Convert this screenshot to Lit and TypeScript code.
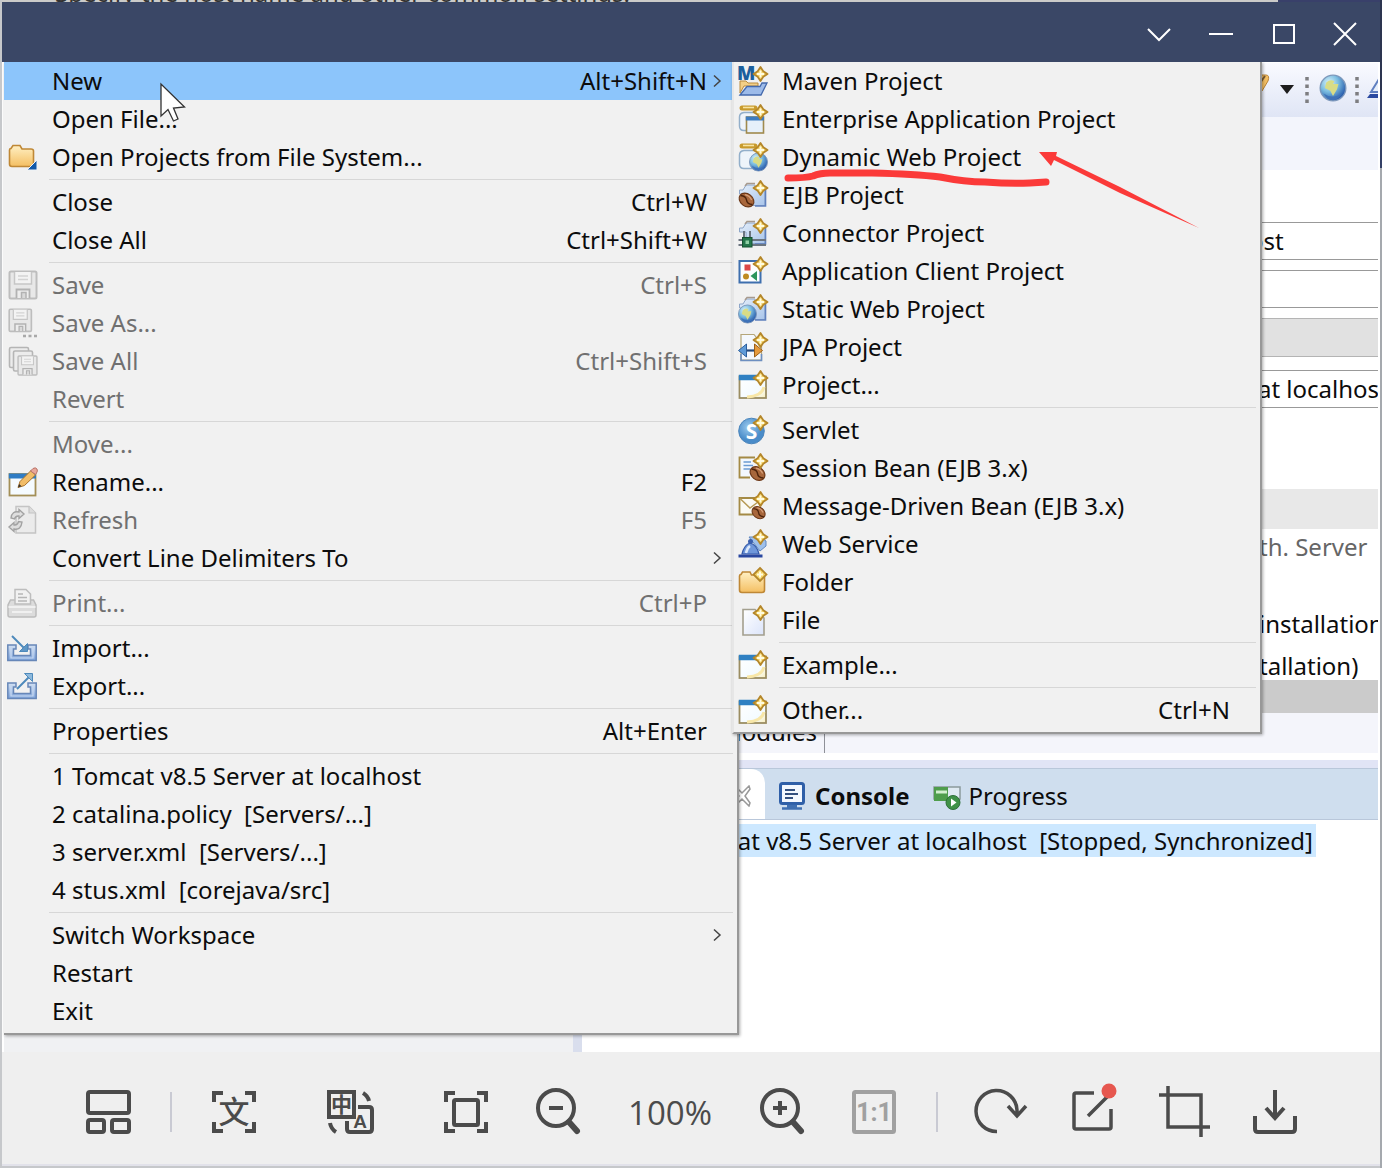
import { LitElement, html, svg, css, nothing } from "lit";
import { customElement, state } from "lit/decorators.js";
import { classMap } from "lit/directives/class-map.js";

type Item = {
  label: string;
  icon?: string;
  keys?: string;
  sub?: boolean;
  off?: boolean;
};

const FILE_MENU: Item[][] = [
  [
    { label: "New", keys: "Alt+Shift+N", sub: true },
    { label: "Open File..." },
    { label: "Open Projects from File System...", icon: "openProjects" },
  ],
  [
    { label: "Close", keys: "Ctrl+W" },
    { label: "Close All", keys: "Ctrl+Shift+W" },
  ],
  [
    { label: "Save", keys: "Ctrl+S", icon: "save", off: true },
    { label: "Save As...", icon: "saveAs", off: true },
    { label: "Save All", keys: "Ctrl+Shift+S", icon: "saveAll", off: true },
    { label: "Revert", off: true },
  ],
  [
    { label: "Move...", off: true },
    { label: "Rename...", keys: "F2", icon: "rename" },
    { label: "Refresh", keys: "F5", icon: "refresh", off: true },
    { label: "Convert Line Delimiters To", sub: true },
  ],
  [{ label: "Print...", keys: "Ctrl+P", icon: "print", off: true }],
  [
    { label: "Import...", icon: "import" },
    { label: "Export...", icon: "export" },
  ],
  [{ label: "Properties", keys: "Alt+Enter" }],
  [
    { label: "1 Tomcat v8.5 Server at localhost" },
    { label: "2 catalina.policy  [Servers/...]" },
    { label: "3 server.xml  [Servers/...]" },
    { label: "4 stus.xml  [corejava/src]" },
  ],
  [{ label: "Switch Workspace", sub: true }, { label: "Restart" }, { label: "Exit" }],
];

const NEW_MENU: Item[][] = [
  [
    { label: "Maven Project", icon: "maven" },
    { label: "Enterprise Application Project", icon: "enterprise" },
    { label: "Dynamic Web Project", icon: "dynamicWeb" },
    { label: "EJB Project", icon: "ejb" },
    { label: "Connector Project", icon: "connector" },
    { label: "Application Client Project", icon: "appClient" },
    { label: "Static Web Project", icon: "staticWeb" },
    { label: "JPA Project", icon: "jpa" },
    { label: "Project...", icon: "wizard" },
  ],
  [
    { label: "Servlet", icon: "servlet" },
    { label: "Session Bean (EJB 3.x)", icon: "sessionBean" },
    { label: "Message-Driven Bean (EJB 3.x)", icon: "messageBean" },
    { label: "Web Service", icon: "webService" },
    { label: "Folder", icon: "folder" },
    { label: "File", icon: "file" },
  ],
  [{ label: "Example...", icon: "wizard" }],
  [{ label: "Other...", keys: "Ctrl+N", icon: "wizard" }],
];

const sparkle = svg`
  <path d="M22.5 1 L25.3 5.2 L29.5 8 L25.3 10.8 L22.5 15 L19.7 10.8 L15.5 8 L19.7 5.2 Z" fill="#f4d468" stroke="#b4862a" stroke-width="1.8" stroke-linejoin="round"/>
  <path d="M22.5 4.5 V11.5 M19 8 H26" stroke="#fffbe0" stroke-width="1.8"/>`;

const bean = (x: number, y: number) => svg`
  <g transform="translate(${x} ${y}) rotate(38)">
    <ellipse rx="8" ry="6.2" fill="#a8673c" stroke="#6b3717" stroke-width="1.2"/>
    <path d="M-7.5 0 Q-3 -3 0 0 T7.5 0" fill="none" stroke="#4e240c" stroke-width="1.5"/>
    <path d="M-4.5 -3.4 Q0 -5.4 4 -3.2" fill="none" stroke="#d8a079" stroke-width="1.3"/>
  </g>`;

const globe = (x: number, y: number, r: number) => svg`
  <g transform="translate(${x} ${y}) scale(${r / 10})">
    <circle r="9.5" fill="url(#g-globe)" stroke="#7d98bb" stroke-width="1"/>
    <path d="M-5 -4 Q-2 -7 1 -5 L0 -3 L4 -3 L3 1 L0 6 L-2 2 L-6 0 Z" fill="#d8dc86"/>
    <path d="M-7 4 Q0 9 7 4 Q3 9 0 9 Q-4 9 -7 4 Z" fill="#3f72b8"/>
  </g>`;

const projectFolder = svg`
  <path d="M1.500 10 H5 L8 5 H17 V8 H27 V25.500 H8 V14 H1.500 Z" fill="url(#g-blue)" stroke="#8ea6c8" stroke-width="1"/>
  <path d="M7 6 L9 3.500 H17" fill="none" stroke="#a79a8e" stroke-width="1.500"/>
  <path d="M27.500 10 V26 H17" fill="none" stroke="#5f80bd" stroke-width="1.600"/>`;

const jeeBase = svg`
  <path d="M4 4 H17" stroke="#c89a2c" stroke-width="5" stroke-linecap="round"/>
  <path d="M5 3.500 H16" stroke="#f7e3a0" stroke-width="1.600"/>
  <path d="M18 8.500 H6 Q1.500 9 1.500 13 V22 Q1.500 26.500 6 26.500 H16" fill="#eef4fa" stroke="#93afca" stroke-width="1.500"/>`;

const disk = svg`
  <rect x="1.500" y="1.500" width="27" height="27" rx="1.500" fill="#e8e8e8" stroke="#bdbdbd" stroke-width="2"/>
  <path d="M6.500 2 V14 H23.500 V2" fill="#f3f3f3" stroke="#c6c6c6" stroke-width="1.500"/>
  <path d="M10 6 H20 M10 9.500 H20" stroke="#d3d3d3" stroke-width="1.500"/>
  <path d="M8.500 28 V19.500 H21.500 V28" fill="#ededed" stroke="#b2b2b2" stroke-width="1.800"/>
  <path d="M13.500 28 V22.500 H18 V28" fill="#d9d9d9" stroke="#b2b2b2" stroke-width="1.500"/>`;

const tray = svg`
  <path d="M-0.200 12 H8 V16 H5.500 V22.500 H22.500 V16 H20 V12 H28.200 V27.500 H-0.200 Z" fill="url(#g-tray)" stroke="#6787b8" stroke-width="1.500"/>
  <path d="M3 15 V25 H25 V15" fill="none" stroke="#c8d9f0" stroke-width="1.200"/>`;

const ICONS: Record<string, unknown> = {
  openProjects: svg`
    <path d="M1.500 8 Q1.500 6.500 3 6.500 L5 3.500 H12 L14 7 H23 Q25.500 7 25.500 9 V22 Q25.500 24.500 23 24.500 H4 Q1.500 24.500 1.500 22 Z" fill="url(#g-folder)" stroke="#bf8836" stroke-width="1.600"/>
    <path d="M29 18 V28 H19 Z" fill="#1259a8" stroke="#eef3f8" stroke-width="1"/>`,
  save: disk,
  saveAs: svg`<g transform="scale(.82)">${disk}</g><path d="M15 28 H18 M20.500 28 H23.500 M26 28 H29" stroke="#a9a9a9" stroke-width="2.500"/>`,
  saveAll: svg`
    <rect x="1.500" y="1.500" width="19" height="20" rx="1.500" fill="#ececec" stroke="#b5b5b5" stroke-width="1.600"/>
    <rect x="5.500" y="5" width="19" height="20" rx="1.500" fill="#ececec" stroke="#b5b5b5" stroke-width="1.600"/>
    <g transform="translate(9 9) scale(.7)">${disk}</g>`,
  rename: svg`
    <rect x="1.500" y="7" width="26" height="21.500" fill="#f5fbff" stroke="#a38f57" stroke-width="1.800"/>
    <path d="M0.800 9 H28" stroke="#2f7cc4" stroke-width="5"/>
    <path d="M10 20.500 L12 14.500 L23 3.500 L27.500 8 L16.500 18.500 Z" fill="#f1bd68" stroke="#a8732c" stroke-width="1"/>
    <path d="M10 20.500 L11.200 17 L13.500 19.300 Z" fill="#333"/>
    <path d="M22.500 4 L25 1.500 Q27.500 0 29 2 Q30 4 28.500 6 L27.500 7.500 Z" fill="#e9a79b" stroke="#b87468" stroke-width="1"/>`,
  refresh: svg`
    <path d="M8 1.500 H21 L27.500 8 V28 H8 Z" fill="#ebebeb" stroke="#c4c4c4" stroke-width="1.500"/>
    <path d="M21 1.500 V8 H27.500" fill="#dcdcdc" stroke="#c4c4c4" stroke-width="1.200"/>
    <path d="M3 13 Q4 5.500 11 7 V4.500 L16 9 L11 13.500 V11 Q7.500 10.500 6.500 14 Z" fill="#dedede" stroke="#a2a2a2" stroke-width="1.400"/>
    <path d="M14 17 Q13 25.500 6 24 V26.500 L1 22 L6 17.500 V20 Q9.500 20.500 10.500 16.500 Z" fill="#dedede" stroke="#a2a2a2" stroke-width="1.400"/>`,
  print: svg`
    <path d="M2.500 12 H25.500 L28 17 V27 Q28 29 26 29 H2 Q0 29 0 27 V17 Z" fill="#dcdcdc" stroke="#bcbcbc" stroke-width="1.500"/>
    <path d="M7 16 V1.500 H18 L22.500 6 V16 Z" fill="#f1f1f1" stroke="#bdbdbd" stroke-width="1.500"/>
    <path d="M10 6 H15 M10 9.500 H19 M10 13 H19" stroke="#b6b6b6" stroke-width="1.400"/>
    <path d="M0.500 19 H27.500 M4 24 H24" stroke="#f0f0f0" stroke-width="2"/>`,
  import: svg`${tray}<path d="M4 3 L17 16" stroke="#4d89bb" stroke-width="2"/><path d="M19.500 10.500 V18.500 H11.500 Z" fill="#5f97c6" stroke="#4d89bb"/>`,
  export: svg`${tray}<path d="M9 18 L22 5" stroke="#4d89bb" stroke-width="2"/><path d="M16.500 2.500 H24.500 V10.500 Z" fill="#8db9dc" stroke="#4d89bb"/>`,
  maven: svg`
    <path d="M2 27 V15 H8 L10 17 H20 V20 H6 Z" fill="#f3cf86" stroke="#b98b3e"/>
    <text x="-1" y="14" font-size="19" font-weight="800" fill="#1c5f9c" font-family="Open Sans">M</text>
    <path d="M2 29 L9 20.500 H22 L24 17 H29 L23 29 Z" fill="#9dbbe9" stroke="#4469ac" stroke-width="1.300"/>
    ${sparkle}`,
  enterprise: svg`${jeeBase}
    <rect x="8.500" y="13" width="17" height="16" fill="#e6f0fa" stroke="#a08a4d" stroke-width="1.600"/>
    <path d="M7.800 14.500 H26" stroke="#3d7cc0" stroke-width="4"/>${sparkle}`,
  dynamicWeb: svg`${jeeBase}${globe(20.5, 20, 9.5)}${sparkle}`,
  ejb: svg`${projectFolder}${bean(8.5, 20)}${sparkle}`,
  connector: svg`${projectFolder}
    <path d="M0.500 22 H28 M0.500 27 H28 M6 13 V22 M12 13 V22" stroke="#6c7580" stroke-width="2"/>
    <rect x="4.500" y="19.500" width="9.500" height="9.500" fill="#24764a" stroke="#155231"/>
    <rect x="7.500" y="22.500" width="3.500" height="3.500" fill="#8fd0a5"/>${sparkle}`,
  appClient: svg`
    <rect x="1.500" y="5" width="21" height="21.500" fill="#fdfeff" stroke="#3e6fae" stroke-width="2"/>
    <rect x="6.500" y="8.500" width="6" height="6" fill="#dc4747"/>
    <circle cx="8" cy="20.500" r="3" fill="#c08c23"/>
    <path d="M19 15 V25 L12.500 20 Z" fill="#2e955c"/>${sparkle}`,
  staticWeb: svg`${projectFolder}${globe(9.5, 20, 9.5)}${sparkle}`,
  jpa: svg`
    <path d="M3 28 V2.500 H16 L23.500 12 V28 Z" fill="#f4f8fd" stroke="#b5a679" stroke-width="1.200"/>
    <path d="M3 22 V28.500 H23.500 V22" fill="none" stroke="#6d8fc0" stroke-width="1.600"/>
    <path d="M6 18.500 H20" stroke="#254a7c" stroke-width="2.200"/>
    <path d="M0.500 18.500 L8.500 12 V25 Z" fill="#5f9bd8" stroke="#2c5f9d"/>
    <path d="M24.500 18.500 L16.500 12 V25 Z" fill="#e59a3c" stroke="#9a5f17"/>${sparkle}`,
  wizard: svg`
    <rect x="1.500" y="6.500" width="26.500" height="21.500" fill="url(#g-page)" stroke="#9b8d62" stroke-width="1.800"/>
    <path d="M0.800 7.500 H20" stroke="#2f80c2" stroke-width="5.500"/>
    <path d="M26 17 Q24 26 9 27" fill="none" stroke="#f8e7a8" stroke-width="3"/>${sparkle}`,
  servlet: svg`
    <circle cx="13.500" cy="16" r="12.800" fill="url(#g-servlet)" stroke="#4b85bb"/>
    <text x="13.500" y="23.500" font-size="21" font-weight="700" fill="#fff" text-anchor="middle" font-family="Open Sans">S</text>${sparkle}`,
  sessionBean: svg`
    <path d="M17 4.500 H1.500 V24.500 H12" fill="#f3f8fe" stroke="#a48a45" stroke-width="1.800"/>
    <path d="M5.500 9 H13 M5.500 12.500 H15 M5.500 16 H12" stroke="#6b9bd2" stroke-width="1.600"/>${bean(19.5, 20.5)}${sparkle}`,
  messageBean: svg`
    <path d="M15 23.500 H1.500 V7 H22 V15" fill="#fbfaf4" stroke="#a48a45" stroke-width="1.800"/>
    <path d="M2 7.500 L12 17 L20 11" fill="none" stroke="#b79a55" stroke-width="1.500"/><g transform="translate(3 4) scale(.88)">${bean(20, 20)}</g>${sparkle}`,
  webService: svg`
    <path d="M11 8 H22 L28 12 V17 L22 22 Z" fill="#9fc0ea" stroke="#6188c0"/>
    <path d="M4 25 Q6 16 12 14 Q19 16 21 25 Z" fill="#6f97da" stroke="#3459a8" stroke-width="1.200"/>
    <circle cx="12.500" cy="12.500" r="2.500" fill="#3a5fae"/>
    <path d="M8 24 Q9 19 12 17" fill="none" stroke="#dce9fb" stroke-width="2.500"/>
    <path d="M0.500 28.500 V25.500 H24.500 V28.500 Z" fill="#2947a0"/>${sparkle}`,
  folder: svg`
    <path d="M1.500 9 Q1.500 7.500 3 7.500 L4.500 5 H12 L13.500 8 H24 Q26.500 8 26.500 10 V23 Q26.500 25.500 24 25.500 H4 Q1.500 25.500 1.500 23 Z" fill="url(#g-folder)" stroke="#bf8836" stroke-width="1.600"/>
    <path d="M22 1 L28.500 7.500 L22 14 L15.500 7.500 Z" fill="#f4d468" stroke="#b4862a" stroke-width="1.800"/>
    <path d="M22 4.500 V10.500 M19 7.500 H25" stroke="#fffbe0" stroke-width="2"/>`,
  file: svg`
    <path d="M5 4.500 H17 L26 13 V30 H5 Z" fill="url(#g-doc)" stroke="#a39f8e" stroke-width="1.600"/>${sparkle}`,
};

const icon = (name?: string) =>
  name
    ? html`<svg class="glyph" viewBox="0 0 30 30" aria-hidden="true">${ICONS[name]}</svg>`
    : nothing;

const corners = svg`<path d="M4 14 V5 H13 M35 5 H44 V14 M44 34 V43 H35 M13 43 H4 V34"/>`;

const TOOLS: Record<string, unknown> = {
  gallery: svg`<rect x="4" y="4" width="41" height="21" rx="2"/><rect x="4" y="32" width="16" height="12" rx="2"/><rect x="28" y="32" width="17" height="12" rx="2"/>`,
  ocr: svg`${corners}<text x="24" y="35" font-size="31" font-weight="500" text-anchor="middle" class="solid" font-family="Noto Sans CJK SC">文</text>`,
  translate: svg`
    <path d="M32 19 H43 Q46 19 46 22 V41 Q46 44 43 44 H24 Q21 44 21 41 V33"/>
    <rect x="3" y="4" width="25" height="25"/>
    <path d="M37 5 Q42 8 43 13 M4 35 Q5 41 10 44"/>
    <text x="15.500" y="24" font-size="21" font-weight="700" text-anchor="middle" class="solid" font-family="Noto Sans CJK SC">中</text>
    <text x="34" y="40" font-size="19" font-weight="700" text-anchor="middle" class="solid" font-family="Liberation Sans">A</text>`,
  fit: svg`${corners}<rect x="12" y="12" width="24" height="25" rx="1.500"/>`,
  zoomOut: svg`<circle cx="22" cy="20" r="18"/><path d="M15 20 H29"/><path d="M35 34 L43 43" class="thick"/>`,
  zoomIn: svg`<circle cx="22" cy="20" r="18"/><path d="M15 20 H29 M22 13 V27"/><path d="M35 34 L43 43" class="thick"/>`,
  actual: svg`<rect x="4" y="4" width="40" height="40" rx="1.500"/><text x="24" y="33" font-size="25" font-weight="700" text-anchor="middle" class="solid" font-family="Roboto">1:1</text>`,
  rotate: svg`<path d="M21 43.500 A20.500 20.500 0 1 1 41 22 V27 M32 18 L41 28 L50 18" stroke-width="3.500"/>`,
  edit: svg`<path d="M26 5 H8 Q6 5 6 7 V39 Q6 41 8 41 H41 Q43 41 43 39 V21 M20 28 L40 8" stroke-width="3.500"/><circle cx="41" cy="3" r="7.500" class="dot"/>`,
  crop: svg`<path d="M8 -2 V39 H50 M-1 7 H41 V49" stroke-width="3.500"/>`,
  download: svg`<path d="M23 2 V29 M14 20 L23 30 L32 20 M3 28 V41 Q3 44 6 44 H40 Q43 44 43 41 V28"/>`,
};

@customElement("app-root")
export class AppRoot extends LitElement {
  @state() private open = "New";

  static styles = css`
    :host {
      display: flex;
      flex-direction: column;
      box-sizing: border-box;
      min-height: 100vh;
      padding: 0 2px 2px;
      overflow: hidden;
      background: linear-gradient(#2d3550 0 90px, #344066 90px 168px, #a5a9ae 168px) right / 2px 100% no-repeat, #c6c8cb;
      font: 24px/32px "Noto Sans", "Open Sans", sans-serif;
      color: #0c0c0c;
    }
    button, input {
      font: inherit;
      color: inherit;
      border: 0;
      margin: 0;
      padding: 0;
      background: none;
      border-radius: 0;
    }
    .behind {
      display: flex;
      align-items: flex-end;
      justify-content: space-between;
      height: 2px;
      overflow: hidden;
      line-height: 18px;
      white-space: nowrap;
      color: #333;
      padding-left: 53px;
      background: linear-gradient(90deg, #cbcbc9 1276px, #39406a 1276px);
    }
    .titlebar {
      display: flex;
      justify-content: flex-end;
      height: 60px;
      background: #3a4766;
      padding-right: 4px;
    }
    .titlebar button {
      width: 62px;
      height: 60px;
      padding-top: 3px;
    }
    .titlebar svg {
      display: block;
      margin: auto;
      width: 24px;
      height: 24px;
      fill: none;
      stroke: #fff;
      stroke-width: 2;
    }
    .stage {
      position: relative;
      flex: 1;
      display: grid;
      grid-template-columns: 569px 9px minmax(0, 1fr);
      overflow: hidden;
      padding: 1px 2px 0;
      background: #fff;
    }
    .outline { background: #f0f1f3; }
    .sash { background: #d9deed; }
    .ide {
      display: flex;
      flex-direction: column;
      overflow: hidden;
      white-space: nowrap;
    }
    .coolbar {
      display: flex;
      justify-content: flex-end;
      height: 54px;
      background: linear-gradient(#f9faff, #dfe5f5);
    }
    .coolbar svg { width: 120px; height: 50px; flex: none; }
    .heading { height: 53px; background: #f3f5fc; }
    .form {
      display: flex;
      flex-direction: column;
      padding-top: 52px;
    }
    .field {
      box-sizing: border-box;
      height: 38px;
      border: solid #999;
      border-width: 1px 0;
      padding-left: 667px;
      padding-bottom: 2px;
      margin-bottom: 10px;
      width: 100%;
    }
    .field.name { padding-left: 676px; margin-bottom: 81px; }
    .strip {
      box-sizing: border-box;
      height: 39px;
      background: #e1e1e1;
      border: solid #b4b4b4;
      border-width: 1px 0;
      margin-bottom: 13px;
    }
    .section { height: 40px; background: #e8e8e8; margin-bottom: 4px; }
    .line { padding-left: 677px; line-height: 28px; margin-bottom: 14px; }
    .line.hint { color: #666; margin-bottom: 49px; }
    .line.last { margin-bottom: 0; }
    .scroll { height: 33px; background: #cbcbcb; }
    .pages {
      display: flex;
      height: 40px;
      background: #f4f5fb;
    }
    .page {
      width: 235px;
      padding-right: 7px;
      border-right: 1px solid #8e9098;
      text-align: right;
      line-height: 38px;
    }
    .band {
      height: 8px;
      margin-top: 7px;
      background: #e1e4f5;
    }
    .views {
      display: flex;
      align-items: center;
      height: 50px;
      background: #cfdeee;
      border: solid #b9c7da;
      border-width: 1px 0;
    }
    .view {
      display: flex;
      align-items: center;
      gap: 8px;
      box-sizing: border-box;
      height: 50px;
      padding: 3px 9px 0 14px;
    }
    .view.current {
      width: 183px;
      padding-right: 14px;
      justify-content: flex-end;
      background: #fff;
      border-radius: 0 14px 0 0;
    }
    .view.bold { font-weight: 700; }
    .view svg { width: 28px; height: 28px; }
    .view.current svg { width: 18px; height: 22px; }
    .tree { flex: 1; padding-top: 4px; background: #fff; }
    .selected {
      width: 731px;
      padding-right: 3px;
      line-height: 33px;
      text-align: right;
      white-space: pre;
      background: #cde8ff;
    }
    .menu {
      position: absolute;
      top: 0;
      left: 2px;
      box-sizing: border-box;
      width: 735px;
      padding: 0 4px 3px 0;
      background: #f1f1f1;
      border: solid #989898;
      border-width: 0 2px 2px 0;
      box-shadow: 1px 1px 3px #0005;
    }
    .menu.sub {
      left: 730px;
      width: 530px;
      border-left: 2px solid #e6e6e6;
    }
    .rule {
      height: 1px;
      margin: 3px 0 3px 45px;
      background: #d7d7d7;
    }
    .item {
      display: flex;
      align-items: center;
      width: 100%;
      height: 38px;
      text-align: left;
      white-space: pre;
    }
    .item.on { background: #8cc5fb; }
    .item:disabled { color: #707070; }
    .slot {
      display: flex;
      width: 44px;
      padding-left: 4px;
      flex: none;
    }
    .glyph { width: 30px; height: 30px; overflow: visible; }
    .label { flex: 1; }
    .more {
      width: 26px;
      display: flex;
      padding-left: 0;
    }
    .more svg { width: 10px; height: 14px; margin-left: 5px; fill: none; stroke: #444; stroke-width: 1.5; }
    .marks {
      position: absolute;
      top: 0;
      left: 0;
      width: 1300px;
      height: 240px;
      pointer-events: none;
    }
    .tools {
      display: flex;
      justify-content: center;
      align-items: center;
      gap: 38px;
      height: 114px;
      padding: 8px 0 0 2px;
      box-sizing: border-box;
      background: #efefef;
      border-bottom: 2px solid #e2e2ea;
    }
    .set { display: flex; align-items: center; gap: 44px; }
    .set.wide { gap: 68px; }
    .tools button { width: 48px; height: 48px; color: #4b4b4b; }
    .tools button:disabled { color: #a0a0a0; }
    .tools svg {
      display: block;
      width: 48px;
      height: 48px;
      overflow: visible;
      fill: none;
      stroke: currentColor;
      stroke-width: 4;
    }
    .tools .solid { fill: currentColor; stroke: none; }
    .tools .thick { stroke-width: 6; stroke-linecap: round; }
    .tools .dot { fill: #e6574f; stroke: none; }
    .bar { width: 2px; height: 40px; background: #c9cad3; }
    .percent {
      width: 88px;
      padding-top: 2px;
      text-align: center;
      font-family: "Open Sans", sans-serif;
      font-size: 33px;
      color: #4b4b4b;
    }
  `;

  private menu(groups: Item[][], label: string, extra: string) {
    return html`<div class=${"menu " + extra} role="menu" aria-label=${label}>
      ${groups.map(
        (group, i) => html`
          ${i ? html`<div class="rule" role="separator"></div>` : nothing}
          <div class="group">
            ${group.map(
              (item) => html`<button
                class=${classMap({ item: true, on: item.label === this.open })}
                role="menuitem"
                ?disabled=${item.off}
                @click=${() => item.sub && (this.open = item.label)}
              ><span class="slot">${icon(item.icon)}</span><span class="label">${item.label}</span><span>${item.keys}</span><span class="more">${
                item.sub
                  ? html`<svg viewBox="0 0 10 14"><path d="M2 1.500 L8 7 L2 12.500"/></svg>`
                  : nothing
              }</span></button>`
            )}
          </div>
        `
      )}
    </div>`;
  }

  private tool(name: string, label: string, disabled = false) {
    return html`<button aria-label=${label} ?disabled=${disabled}>
      <svg viewBox="0 0 48 48">${TOOLS[name]}</svg>
    </button>`;
  }

  private workbench() {
    return html`<div class="outline"></div>
      <div class="sash"></div>
      <div class="ide">
        <div class="coolbar">
          <svg viewBox="0 0 120 50" aria-hidden="true">
            <path d="M0 12 H8 Q12 12 10 18 L4 28 H0 Z" fill="#f2bd62" stroke="#b98336"/>
            <path d="M2 20 L7 13" stroke="#7a5a30" stroke-width="2"/>
            <path d="M22 22 H36 L29 31 Z" fill="#1d1d1d"/>
            <path d="M49 14 V40 M99 14 V40" stroke="#7d7d80" stroke-width="3.500" stroke-dasharray="3.500 4"/>
            ${globe(75, 25, 13.5)}
            <path d="M121 16 L113 29 H121" fill="#e6eefb" stroke="#5f7fc0" stroke-width="2"/><path d="M109 35 L112 31 H120 V35 Z" fill="#2b4aa0"/>
          </svg>
        </div>
        <div class="heading"></div>
        <div class="form">
          <input class="field" aria-label="Host name" .value=${"ost"} />
          <input class="field" aria-label="Runtime" />
          <div class="strip"></div>
          <input class="field name" aria-label="Server name" .value=${"at localhost"} />
          <div class="section"></div>
          <div class="line hint">th. Server</div>
          <div class="line">installation</div>
          <div class="line last">tallation)</div>
        </div>
        <div class="scroll"></div>
        <div class="pages"><div class="page">Modules</div></div>
        <div class="band"></div>
        <div class="views">
          <div class="view current">
            <svg viewBox="0 0 18 22" fill="#fff" stroke="#999" stroke-width="1.500"><path d="M2 1 L9 8 L16 1 L17 4 L12 11 L17 18 L16 21 L9 14 L2 21 L1 18 L6 11 L1 4 Z"/></svg>
          </div>
          <div class="view bold">
            <svg viewBox="0 0 28 28"><rect x="1.500" y="1.500" width="23" height="20" rx="2" fill="#f3f8ff" stroke="#2f5fa8" stroke-width="3"/><path d="M6 8 H16 M6 12 H19 M6 16 H14" stroke="#33507f" stroke-width="1.800"/><path d="M8 24 H18 M3 26.500 H23" stroke="#3f6fb2" stroke-width="2.500"/></svg>
            Console
          </div>
          <div class="view">
            <svg viewBox="0 0 28 28"><rect x="1" y="5" width="26" height="12" fill="#dfeaf2" stroke="#8c9a9c" stroke-width="1.500"/><path d="M1 5 H15 V19 H1 Z" fill="#4f9d4c"/><path d="M3 10 H14" stroke="#d3efcf" stroke-width="3"/><circle cx="20" cy="20.500" r="7" fill="#3f9147" stroke="#2e6f38"/><path d="M18 16.500 L23.500 20.500 L18 24.500 Z" fill="#fff"/></svg>
            Progress
          </div>
        </div>
        <div class="tree"><div class="selected">Tomcat v8.5 Server at localhost  [Stopped, Synchronized]</div></div>
      </div>`;
  }

  render() {
    return html`
      <div class="behind">Specify the host name and other common settings.</div>
      <header class="titlebar">
        <button aria-label="Collapse"><svg viewBox="0 0 24 24"><path d="M1 7 L12 18 L23 7"/></svg></button>
        <button aria-label="Minimize"><svg viewBox="0 0 24 24"><path d="M0 12 H24"/></svg></button>
        <button aria-label="Maximize"><svg viewBox="0 0 24 24"><rect x="3" y="3" width="20" height="18"/></svg></button>
        <button aria-label="Close"><svg viewBox="0 0 24 24"><path d="M1 1 L23 23 M23 1 L1 23"/></svg></button>
      </header>
      <main class="stage">
        ${this.workbench()}
        ${this.menu(FILE_MENU, "File", "")}
        ${this.menu(NEW_MENU, "New", "sub")}
        <svg class="marks" viewBox="2 62 1300 240" aria-hidden="true">
          <defs>
            <linearGradient id="g-folder" x2="0" y2="1"><stop stop-color="#fff0c4"/><stop offset="1" stop-color="#f4bf62"/></linearGradient>
            <linearGradient id="g-blue" x2="1" y2="1"><stop stop-color="#e4eefa"/><stop offset="1" stop-color="#a9c5ea"/></linearGradient>
            <linearGradient id="g-tray" x2="0" y2="1"><stop stop-color="#d3e1f3"/><stop offset="1" stop-color="#7da3dc"/></linearGradient>
            <linearGradient id="g-page" x2="1" y2="1"><stop stop-color="#ffffff"/><stop offset=".7" stop-color="#f4fbff"/><stop offset="1" stop-color="#fbeeb8"/></linearGradient>
            <linearGradient id="g-doc" x2="1" y2="1"><stop stop-color="#ffffff"/><stop offset="1" stop-color="#dbe4fa"/></linearGradient>
            <radialGradient id="g-globe" cx=".35" cy=".3" r=".7"><stop stop-color="#dcf3fa"/><stop offset=".5" stop-color="#7bbde0"/><stop offset="1" stop-color="#2b5fae"/></radialGradient>
            <radialGradient id="g-servlet" cx=".4" cy=".35"><stop stop-color="#9ccbee"/><stop offset="1" stop-color="#4a8cc9"/></radialGradient>
          </defs>
          <path d="M788 178 C800 178 806 178 813 176 Q820 173 830 173 H872 Q915 174 940 177 Q965 182 985 182 Q1010 184 1030 183 L1046 182" fill="none" stroke="#fb3a39" stroke-width="7" stroke-linecap="round"/>
          <path d="M1039 152 L1057 152 L1056 156 L1120 187 L1199 228 L1120 193 L1054 160 L1051 166 Z" fill="#fb3a39"/>
          <path d="M161 84 V116 L168 109.500 L173.500 121 L178 119 L173.500 108 L184.500 107 Z" fill="#fff" stroke="#333" stroke-width="1.300"/>
        </svg>
      </main>
      <footer class="tools">
        ${this.tool("gallery", "Gallery")}
        <span class="bar"></span>
        <div class="set wide">
          ${this.tool("ocr", "Recognize text")} ${this.tool("translate", "Translate")}
          <div class="set">
            ${this.tool("fit", "Fit to window")} ${this.tool("zoomOut", "Zoom out")}
            <span class="percent">100%</span>
            ${this.tool("zoomIn", "Zoom in")} ${this.tool("actual", "Actual size", true)}
          </div>
        </div>
        <span class="bar"></span>
        <div class="set">
          ${this.tool("rotate", "Rotate")} ${this.tool("edit", "Edit")} ${this.tool("crop", "Crop")}
          ${this.tool("download", "Save")}
        </div>
      </footer>
    `;
  }
}
